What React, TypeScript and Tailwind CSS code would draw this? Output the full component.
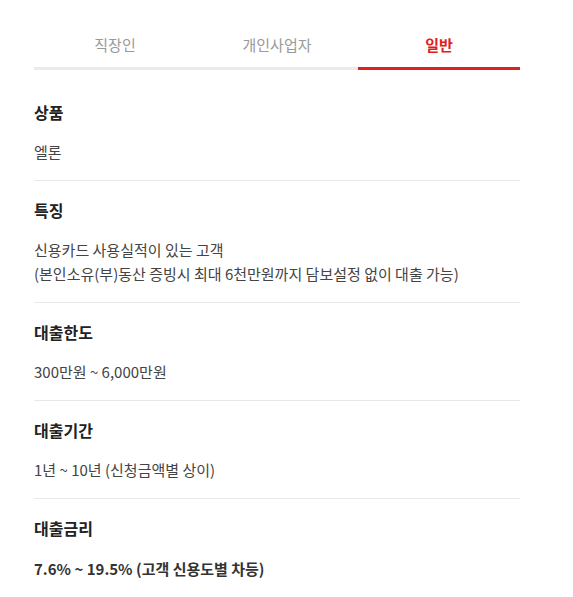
import React, { useState } from "react";

const tabs = ["직장인", "개인사업자", "일반"];

type Row = { title: string; lines: string[]; strong?: boolean };

const rows: Row[] = [
  { title: "상품", lines: ["엘론"] },
  {
    title: "특징",
    lines: [
      "신용카드 사용실적이 있는 고객",
      "(본인소유(부)동산 증빙시 최대 6천만원까지 담보설정 없이 대출 가능)",
    ],
  },
  { title: "대출한도", lines: ["300만원 ~ 6,000만원"] },
  { title: "대출기간", lines: ["1년 ~ 10년 (신청금액별 상이)"] },
  { title: "대출금리", lines: ["7.6% ~ 19.5% (고객 신용도별 차등)"], strong: true },
];

const App: React.FC = () => {
  const [active, setActive] = useState(2);

  return (
    <div
      className="min-h-[597px] bg-white pl-[34px]"
      style={{ fontFamily: '"Noto Sans CJK KR", "Noto Sans", sans-serif' }}
    >
      <div className="w-[486px]">
        <div className="flex">
          {tabs.map((tab, i) => (
            <button
              key={tab}
              type="button"
              onClick={() => setActive(i)}
              className={
                i === active
                  ? "flex-1 border-b-[3px] border-[#e02020] pt-[33px] pb-[10px] text-[15px] leading-[24px] font-bold text-[#e02020]"
                  : "flex-1 border-b-[3px] border-[#ebebeb] pt-[33px] pb-[10px] text-[15px] leading-[24px] text-[#999999]"
              }
            >
              {tab}
            </button>
          ))}
        </div>

        <div className="pt-[14px]">
          {rows.map((row, i) => (
            <div
              key={row.title}
              className={
                i === 0
                  ? "pt-[16px] pb-[16px]"
                  : "border-t border-[#e8e8e8] pt-[17px] pb-[16px]"
              }
            >
              <h3 className="text-[16px] leading-[24px] font-bold text-[#222222]">{row.title}</h3>
              <div
                className={
                  row.strong
                    ? "mt-[17px] text-[15px] leading-[24px] font-bold text-[#333333]"
                    : "mt-[16px] text-[15px] leading-[24px] text-[#444444]"
                }
              >
                {row.lines.map((line) => (
                  <p key={line}>{line}</p>
                ))}
              </div>
            </div>
          ))}
        </div>
      </div>
    </div>
  );
};

export default App;
